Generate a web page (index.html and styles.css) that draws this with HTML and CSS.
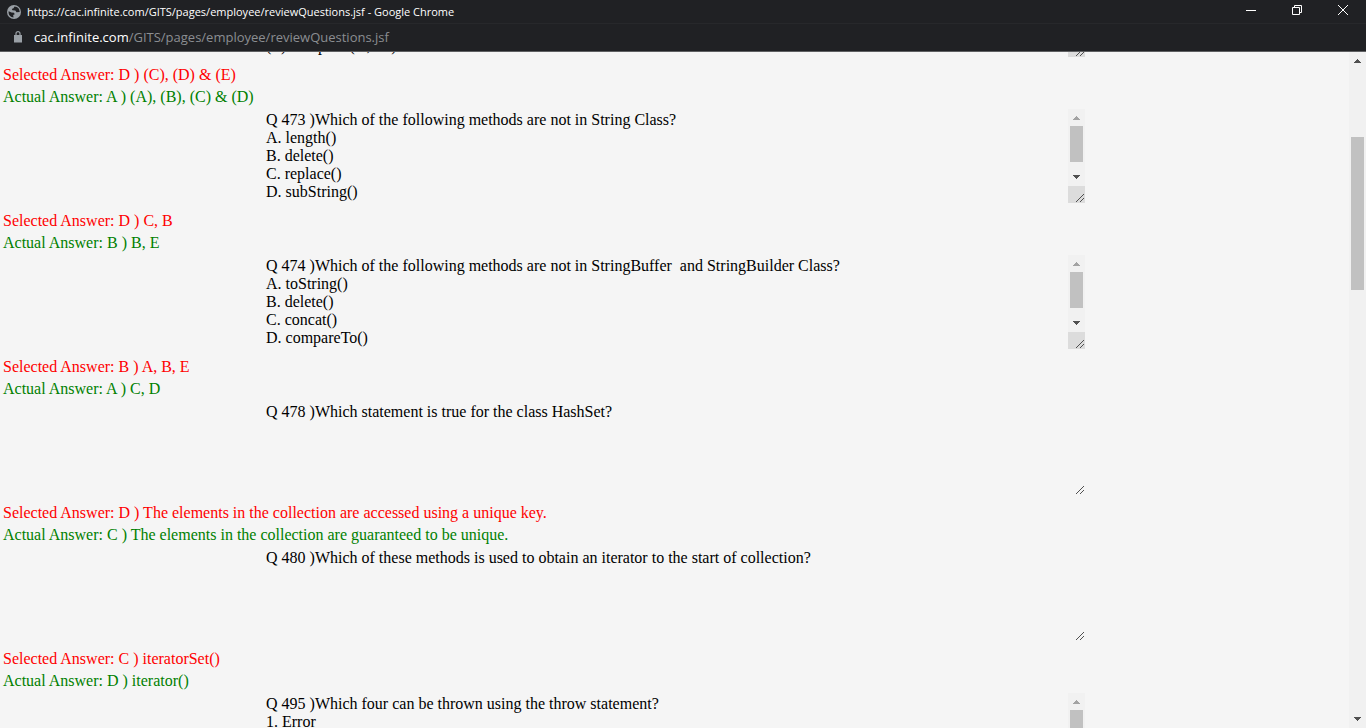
FILE: index.html
```html
<!DOCTYPE html>
<html lang="en">
<head>
<meta charset="utf-8">
<title>Review Questions</title>
<link rel="stylesheet" href="styles.css">
</head>
<body>
<svg class="defs" aria-hidden="true">
  <symbol id="up" viewBox="0 0 17 17"><path d="M8 7h1v1h1v1h1v1h1v1H5v-1h1V9h1V8h1z"/></symbol>
  <symbol id="down" viewBox="0 0 17 17"><path d="M5 6h7v1h-1v1h-1v1H9v1H8V9H7V8H6V7H5z"/></symbol>
  <symbol id="grip" viewBox="0 0 17 17"><path d="M8 15h1v1H8zM9 14h1v1H9zM10 13h1v1h-1zM11 12h1v1h-1zM12 11h1v1h-1zM13 10h1v1h-1zM14 9h1v1h-1zM15 8h1v1h-1zM12 15h1v1h-1zM13 14h1v1h-1zM14 13h1v1h-1zM15 12h1v1h-1z"/></symbol>
</svg>
<div class="window">
  <header class="titlebar">
    <svg class="globe" viewBox="0 0 14 14" aria-hidden="true"><circle cx="7" cy="7" r="7" fill="#9aa0a6"/><path d="M1.600 6.200 4.500 7.500l2.500.2.700 1.600-1.500.8.300 2.400-2-.5A5.800 5.800 0 0 1 1.600 6.200zM7.500 1.500l-1 1.700-1.700.7.700 1.400 2.800.2 1.200 1.700 3.200-.3A5.600 5.600 0 0 0 7.500 1.500z" fill="#202124"/></svg>
    <span class="caption">https://cac.infinite.com/GITS/pages/employee/reviewQuestions.jsf - Google Chrome</span>
    <div class="controls">
      <button aria-label="Minimize"><svg viewBox="0 0 10 10"><path d="M0 5.5h10"/></svg></button>
      <button aria-label="Restore"><svg viewBox="0 0 10 10"><path d="M.5 2.5h7v7h-7zM2.5 2.5v-2h7v7h-2"/></svg></button>
      <button aria-label="Close"><svg viewBox="0 0 10 10"><path d="m0 0 10 10M10 0 0 10"/></svg></button>
    </div>
  </header>
  <div class="address">
    <svg class="lock" viewBox="0 0 8 12" aria-hidden="true"><path d="M0 4h8v7.5H0z" fill="#9aa0a6"/><path d="M2 4.500V2.600a2 2 0 0 1 4 0v1.900" fill="none" stroke="#9aa0a6" stroke-width="1.200"/></svg>
    <span class="url"><b>cac.infinite.com</b>/GITS/pages/employee/reviewQuestions.jsf</span>
  </div>
  <div class="viewport">
    <main class="page">
      <div class="question">
        <textarea rows="5" readonly aria-label="Question 472">




(E) compare (A, int)</textarea>
        <div class="bar"><svg class="arrow dim"><use href="#up"/></svg><div class="lane"><i></i></div><svg class="arrow"><use href="#down"/></svg><svg class="grip corner"><use href="#grip"/></svg></div>
      </div>
      <p class="selected">Selected Answer: D ) (C), (D) &amp; (E)</p>
      <p class="actual">Actual Answer: A ) (A), (B), (C) &amp; (D)</p>
      <div class="question">
        <textarea rows="5" readonly aria-label="Question 473">Q 473 )Which of the following methods are not in String Class?
A. length()
B. delete()
C. replace()
D. subString()</textarea>
        <div class="bar"><svg class="arrow dim"><use href="#up"/></svg><div class="lane"><i></i></div><svg class="arrow"><use href="#down"/></svg><svg class="grip corner"><use href="#grip"/></svg></div>
      </div>
      <p class="selected">Selected Answer: D ) C, B</p>
      <p class="actual">Actual Answer: B ) B, E</p>
      <div class="question">
        <textarea rows="5" readonly aria-label="Question 474">Q 474 )Which of the following methods are not in StringBuffer  and StringBuilder Class?
A. toString()
B. delete()
C. concat()
D. compareTo()</textarea>
        <div class="bar"><svg class="arrow dim"><use href="#up"/></svg><div class="lane"><i></i></div><svg class="arrow"><use href="#down"/></svg><svg class="grip corner"><use href="#grip"/></svg></div>
      </div>
      <p class="selected">Selected Answer: B ) A, B, E</p>
      <p class="actual">Actual Answer: A ) C, D</p>
      <div class="question">
        <textarea rows="5" readonly aria-label="Question 478">Q 478 )Which statement is true for the class HashSet?</textarea>
        <div class="bar plain"><svg class="grip"><use href="#grip"/></svg></div>
      </div>
      <p class="selected">Selected Answer: D ) The elements in the collection are accessed using a unique key.</p>
      <p class="actual">Actual Answer: C ) The elements in the collection are guaranteed to be unique.</p>
      <div class="question">
        <textarea rows="5" readonly aria-label="Question 480">Q 480 )Which of these methods is used to obtain an iterator to the start of collection?</textarea>
        <div class="bar plain"><svg class="grip"><use href="#grip"/></svg></div>
      </div>
      <p class="selected">Selected Answer: C ) iteratorSet()</p>
      <p class="actual">Actual Answer: D ) iterator()</p>
      <div class="question">
        <textarea rows="5" readonly aria-label="Question 495">Q 495 )Which four can be thrown using the throw statement?
1. Error</textarea>
        <div class="bar"><svg class="arrow dim"><use href="#up"/></svg><div class="lane"><i></i></div><svg class="arrow"><use href="#down"/></svg><svg class="grip corner"><use href="#grip"/></svg></div>
      </div>
    </main>
    <div class="scrollbar"><svg class="arrow"><use href="#up"/></svg><div class="track"><i></i></div><svg class="arrow"><use href="#down"/></svg></div>
  </div>
</div>
</body>
</html>
```
FILE: styles.css
```css
* { box-sizing: border-box; }
body { margin: 0; background: #f5f5f5; }
.defs { display: none; }
.window { display: flex; flex-direction: column; height: 100vh; overflow: hidden; }

.titlebar {
  display: flex; align-items: center; height: 24px; flex: none;
  padding-left: 7px; background: #202124; border-bottom: 1px solid #27282b;
  color: #fff; font: 11px "Segoe UI", "Open Sans", "Noto Sans", sans-serif;
}
.globe { width: 14px; height: 14px; margin-right: 6px; }
.caption { flex: 1; white-space: nowrap; }
.controls { display: flex; align-self: stretch; }
.controls button {
  width: 46px; height: 20px; padding: 0; border: 0; background: none;
  display: flex; align-items: center; justify-content: center;
}
.controls svg { width: 10px; height: 10px; fill: none; stroke: #fff; stroke-width: 1; }

.address {
  display: flex; align-items: center; height: 28px; flex: none;
  padding: 0 0 2px 14px; background: #202124; border-bottom: 1px solid #5f6062;
  color: #8b8e92; font: 13px "Segoe UI", "Open Sans", "Noto Sans", sans-serif;
}
.lock { width: 8px; height: 12px; margin-right: 12px; }
.url b { color: #fff; font-weight: 400; }

.viewport { display: flex; flex: 1; min-height: 0; overflow: hidden; }
.page {
  flex: 1; min-width: 0; margin-top: -90px;
  font: 16px/22px "Times New Roman", "Liberation Serif", serif;
}
.page p { margin: 0; padding-left: 3px; }
.selected { color: #f00; }
.actual { color: #008000; }
.question { position: relative; width: 821px; max-width: 100%; margin: 0 auto; padding: 1px 0 7px; }
.question textarea {
  display: block; width: 100%; height: 94px; padding: 2px; border: 0; outline: 0;
  resize: none; overflow: hidden; background: transparent; color: #000;
  font: 16px/18px "Times New Roman", "Liberation Serif", serif;
}

.bar {
  position: absolute; top: 1px; right: 0; bottom: 7px; width: 17px;
  display: flex; flex-direction: column; background: #f1f1f1;
}
.bar.plain { background: none; justify-content: flex-end; }
.arrow, .grip { display: block; flex: none; width: 17px; height: 17px; fill: #505050; }
.dim { fill: #a3a3a3; }
.corner { background: #dcdcdc; }
.lane { flex: 1; padding: 0 2px; }
.lane i { display: block; height: 36px; background: #c1c1c1; }
.scrollbar { display: flex; flex-direction: column; flex: none; width: 17px; background: #f1f1f1; }
.track { display: grid; flex: 1; grid-template-rows: 68fr 153fr 421fr; padding: 0 2px; }
.track i { grid-row: 2; background: #c1c1c1; }
```
